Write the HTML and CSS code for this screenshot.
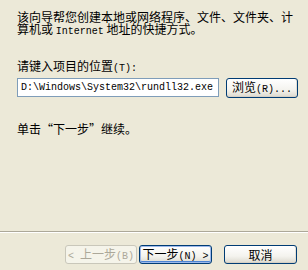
FILE: index.html
```html
<!DOCTYPE html>
<html lang="zh-CN">
<head>
<meta charset="utf-8">
<title>创建快捷方式</title>
<link rel="stylesheet" href="styles.css">
</head>
<body>
<div class="wizard">
  <div class="content">
    <p class="intro">该向导帮您创建本地或网络程序、文件、文件夹、计<br>算机或 <span class="mono">Internet</span> 地址的快捷方式。</p>
    <label class="field-label" for="loc">请键入项目的位置<span class="mono">(T):</span></label>
    <div class="field-row">
      <div class="input" id="loc">D:\Windows\System32\rundll32.exe</div>
      <button class="btn browse">浏览<span class="mono">(R)...</span></button>
    </div>
    <p class="hint">单击“下一步”继续。</p>
  </div>
  <div class="footer">
    <div class="sep"></div>
    <div class="actions">
      <button class="btn disabled"><span class="mono">&lt; </span>上一步<span class="mono">(B)</span></button>
      <button class="btn default">下一步<span class="mono">(N) &gt;</span></button>
      <button class="btn cancel">取消</button>
    </div>
  </div>
</div>
</body>
</html>
```

FILE: styles.css
```css
* { box-sizing: border-box; }
html, body {
  margin: 0;
  padding: 0;
  background: #ECE9D8;
}
body {
  font-family: "Noto Sans CJK SC", "Noto Sans", sans-serif;
  font-size: 12px;
  line-height: 13px;
  color: #000;
}
.mono {
  font-family: "Liberation Mono", monospace;
  font-size: 10px;
}
.wizard {
  width: 308px;
  height: 270px;
  display: flex;
  flex-direction: column;
}
.content {
  padding: 11px 0 0 17px;
  display: flex;
  flex-direction: column;
  align-items: flex-start;
}
.intro, .hint {
  margin: 0;
}
.intro {
  line-height: 12px;
}
.field-label {
  margin-top: 21px;
  display: block;
}
.field-row {
  margin-top: 3px;
  display: flex;
  gap: 7px;
}
.input {
  width: 202px;
  height: 19px;
  border: 1px solid #7F9DB9;
  background: #fff;
  font-family: "Liberation Mono", monospace;
  font-size: 10px;
  line-height: 17px;
  padding-left: 3px;
  white-space: nowrap;
  overflow: hidden;
}
.hint {
  margin-top: 24px;
}
.btn {
  font: inherit;
  color: #000;
  height: 19px;
  padding: 0;
  border: 1px solid #003C74;
  border-radius: 3px;
  background: linear-gradient(#FFFFFF 0%, #F4F3EE 60%, #DCD9CE 100%);
  box-shadow: inset 0 -1px 0 #D6D0C5, inset -1px 0 0 #E3E0D6;
  line-height: 16px;
  text-align: center;
  white-space: nowrap;
}
.browse {
  width: 72px;
  height: 20px;
}
.footer {
  margin-top: auto;
}
.sep {
  height: 2px;
  border-top: 1px solid #ACA899;
  border-bottom: 1px solid #FFFFFF;
}
.actions {
  display: flex;
  justify-content: flex-end;
  padding: 12px 11px 6px 0;
}
.actions .btn {
  width: 73px;
}
.disabled {
  width: 72px !important;
  color: #ACA899;
  border-color: #C9C7BA;
  background: #F5F4EA;
  box-shadow: none;
}
.default {
  margin-left: 2px;
  box-shadow: inset 0 0 0 1px #9DB9EB, inset 0 -2px 0 #4C83D3;
}
.cancel {
  margin-left: 12px;
}
```
